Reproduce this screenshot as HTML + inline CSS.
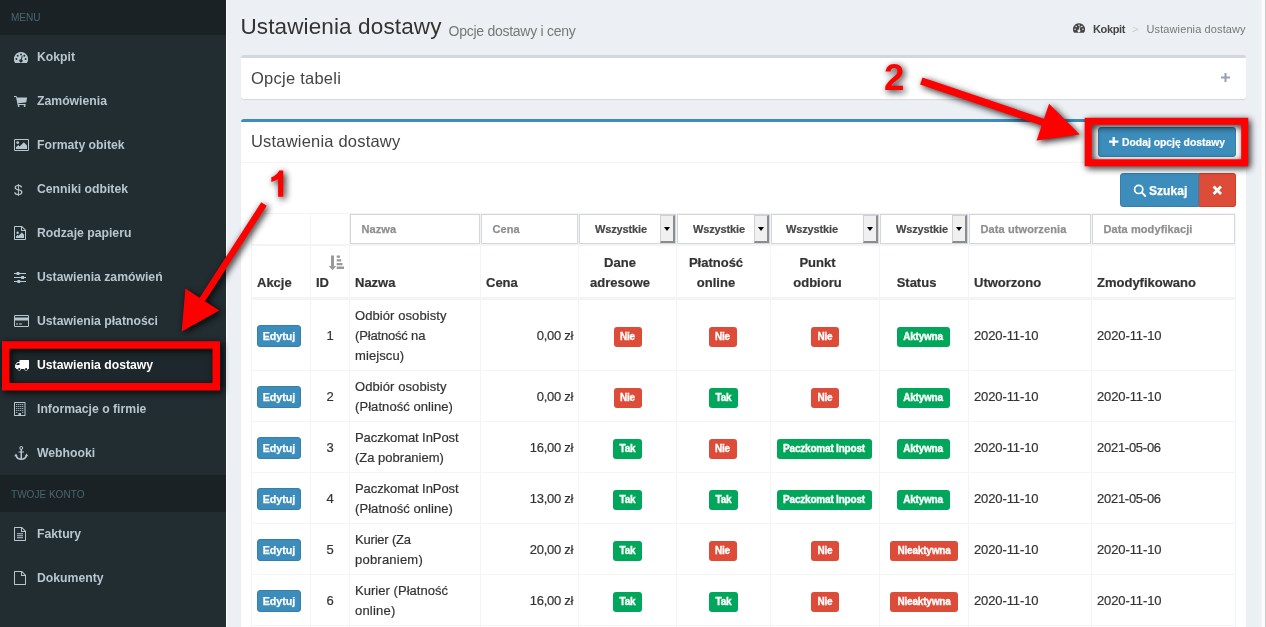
<!DOCTYPE html>
<html lang="pl">
<head>
<meta charset="utf-8">
<title>Ustawienia dostawy</title>
<style>
*{box-sizing:border-box;margin:0;padding:0}
html,body{width:1266px;height:627px;overflow:hidden;font-family:"Liberation Sans",sans-serif}
body{font-family:"Liberation Sans",sans-serif;font-size:13px;color:#333;background:#ecf0f5;position:relative}
#w{position:absolute;left:0;top:0;width:1266px;height:627px;overflow:hidden;will-change:transform}
.abs{position:absolute}
/* ---------- sidebar ---------- */
#side{position:absolute;left:0;top:0;width:226px;height:627px;background:#222d32}
#sideline{position:absolute;left:226px;top:0;width:1px;height:627px;background:#fbfcfd}
.mh{position:absolute;left:0;width:226px;background:#1a2226;color:#4b646f;font-size:11.500px;white-space:nowrap}
.mh span{position:absolute;left:11px;transform:scaleX(.873);transform-origin:0 50%}
.mi{position:absolute;left:0;width:226px;height:44px;color:#b8c7ce;font-weight:bold;font-size:13px;white-space:nowrap}
.mi span{position:absolute;left:37px;top:14px;line-height:16px;transform:scaleX(.94);transform-origin:0 50%}
.mi svg{position:absolute;fill:#b8c7ce}
.mi.act{background:#1e282c;color:#fff}
.mi.act svg{fill:#fff}
/* ---------- content header ---------- */
#h1{position:absolute;left:240.500px;top:13px;letter-spacing:.12px;font-size:22.500px;line-height:28px;color:#333;white-space:nowrap}
#h1s{position:absolute;left:448.500px;top:21px;letter-spacing:-.26px;font-size:14px;line-height:20px;color:#777;white-space:nowrap}
.bc{position:absolute;top:21px;font-size:11px;line-height:16px;white-space:nowrap}
/* ---------- boxes ---------- */
.box{position:absolute;left:241px;width:1005px;background:#fff;border-top:3px solid #d2d6de;border-radius:3px;box-shadow:0 1px 1px rgba(0,0,0,.1)}
.bt{position:absolute;left:10px;font-size:16.5px;line-height:20px;color:#444;white-space:nowrap}
/* ---------- buttons ---------- */
.btn{position:absolute;color:#fff;font-weight:bold;white-space:nowrap;text-align:center}
/* ---------- table ---------- */
table{position:absolute;left:251px;top:213px;width:985px;border-collapse:separate;border-spacing:0;table-layout:fixed}
td,th{border:0 solid #f4f4f4;border-right-width:1px;border-bottom-width:1px;padding:5px;vertical-align:middle;line-height:20px;font-size:13px;text-align:left;overflow:hidden}
td:first-child,th:first-child{border-left-width:1px}
tr.f td{padding:0;height:33px;position:relative;border-top-width:1px;border-bottom-width:2px;overflow:visible}
tr.h th{-webkit-text-stroke:.2px #333;height:54px;vertical-align:bottom;border-bottom-width:3px;font-weight:bold;color:#333;padding:5px 5px 4px 5px}
tr.h th.c{text-align:center;padding-right:20px}
tr.r td{height:51px;padding:6px 5px 4px;-webkit-text-stroke:.2px #333}
tr.r1 td{height:71px}
td.c{text-align:center}
td:nth-child(6) .rd{left:-1px}
td.p{text-align:right;letter-spacing:-.3px}
td.d{letter-spacing:-.11px}
td.n{letter-spacing:0}
.in{-webkit-text-stroke:.25px #8f8f8f;position:absolute;left:0;top:0;height:30px;border:1px solid #d2d6de;background:#fff;font-size:11px;font-weight:bold;color:#8f8f8f;line-height:28px;padding-left:10.500px;letter-spacing:.1px;white-space:nowrap}
.sel{-webkit-text-stroke:.2px #484848;position:absolute;left:0;top:0;height:30px;border:1px solid #d2d6de;background:#fff;font-size:11px;font-weight:bold;color:#484848;line-height:28px;white-space:nowrap;letter-spacing:-.13px}
.sel b{position:absolute;right:0;top:0;width:15px;height:28px;background:#f0f0f0;border:solid;border-width:1px 2px 2px 1px;border-color:#d0d0d0 #8c8c8c #8c8c8c #d0d0d0}
.sel b:after{content:"";position:absolute;left:2.500px;top:11px;border:3.500px solid transparent;border-top:4px solid #000;border-bottom:0}
.ed{-webkit-text-stroke:.25px #fff;position:relative;top:0;display:inline-block;width:44px;height:22px;background:#3c8dbc;border:1px solid #367fa9;border-radius:3px;color:#fff;font-weight:bold;font-size:11.5px;line-height:20px;text-align:center;vertical-align:middle}
.ed i{display:block;font-style:normal;transform:scaleX(.93)}
.lb{-webkit-text-stroke:.35px #fff;position:relative;top:1px;display:inline-block;height:20px;border-radius:3px;color:#fff;font-weight:bold;font-size:10px;line-height:20px;text-align:center;vertical-align:middle;letter-spacing:-.2px}
.num{font-family:"Liberation Sans",sans-serif;font-weight:bold;font-size:36.700px}
.g{background:#00a65a}.rd{background:#dd4b39}
</style>
</head>
<body>
<div id="w">
<div id="side">
<div class="mh" style="top:-2px;height:37px"><span style="top:11px;line-height:16px">MENU</span></div>

<div class="mi" style="top:35px"><svg style="left:14px;top:17px" width="14" height="11" viewBox="0 0 14 11"><path d="M7 0A7 7 0 0 0 .9 10.5q.2.5.7.5h10.8q.5 0 .7-.5A7 7 0 0 0 7 0z"/><g fill="#222d32"><circle cx="2.4" cy="7" r=".95"/><circle cx="3.7" cy="3.8" r=".95"/><circle cx="7" cy="2.4" r=".95"/><circle cx="10.3" cy="3.8" r=".95"/><circle cx="11.6" cy="7" r=".95"/><path d="M7.9 3.6l.9.25-1 3.6A1.6 1.6 0 1 1 6.9 7.2z"/></g></svg><span>Kokpit</span></div>

<div class="mi" style="top:79px"><svg style="left:14px;top:17px" width="13" height="11" viewBox="0 0 13 11"><path d="M0 0h2.2q.4 0 .5.5l.2.9H12.6q.5 0 .4.5l-.7 4q-.1.4-.5.5L4.3 7.2l.2.8H11.6v1H3.6L2.9 5.3 1.9 1H0z"/><circle cx="4.6" cy="10" r="1"/><circle cx="10.6" cy="10" r="1"/></svg><span>Zamówienia</span></div>

<div class="mi" style="top:123px"><svg style="left:14px;top:16px" width="15" height="12" viewBox="0 0 15 12"><path fill-rule="evenodd" d="M1.2 0h12.6A1.2 1.2 0 0 1 15 1.2v9.6a1.2 1.2 0 0 1-1.2 1.2H1.2A1.2 1.2 0 0 1 0 10.800V1.2A1.2 1.2 0 0 1 1.2 0zM1.300 1a.3.3 0 0 0-.3.3v9.400a.3.3 0 0 0 .3.3h12.400a.3.3 0 0 0 .3-.3V1.300a.3.3 0 0 0-.3-.3z"/><circle cx="3.700" cy="3.600" r="1.400"/><path d="M2 10V8.200l2.200-2.200 1.400 1.400L9.800 3.200 13 6.400V10z"/></svg><span>Formaty obitek</span></div>

<div class="mi" style="top:167px"><i style="position:absolute;left:14px;top:13px;font:normal 15.5px/20px 'Liberation Sans',sans-serif;color:#b8c7ce">$</i><span>Cenniki odbitek</span></div>

<div class="mi" style="top:211px"><svg style="left:14px;top:15px" width="12" height="14" viewBox="0 0 12 14"><path fill-rule="evenodd" d="M.8 0H8l4 4v9.200a.8.800 0 0 1-.8.800H.8A.8.800 0 0 1 0 13.200V.8A.8.800 0 0 1 .8 0zM1 1v12h10V5H7.500A.5.500 0 0 1 7 4.500V1zM8 1.400V4h2.600z"/><circle cx="3.600" cy="6.800" r="1.200"/><path d="M2 12v-1.600l1.600-1.600 1 1L7.800 6.600 10 8.800V12z"/></svg><span>Rodzaje papieru</span></div>

<div class="mi" style="top:255px"><svg style="left:14px;top:17px" width="12" height="11" viewBox="0 0 12 11"><path d="M0 1h2.600V0h2.800V1H12v1.100H5.400V3H2.600V2.100H0zM0 5h7.200V4h2.800V5H12v1.100H10V7H7.200V6.100H0zM0 9h3.400V8h2.800V9H12v1.100H6.200V11H3.400V10.100H0z"/></svg><span>Ustawienia zamówień</span></div>

<div class="mi" style="top:299px"><svg style="left:14px;top:16px" width="15" height="12" viewBox="0 0 15 12"><path fill-rule="evenodd" d="M1.200 0h12.600A1.200 1.200 0 0 1 15 1.200v9.600a1.200 1.200 0 0 1-1.200 1.200H1.200A1.200 1.200 0 0 1 0 10.800V1.200A1.200 1.200 0 0 1 1.200 0zM1.300 1a.3.3 0 0 0-.3.3V2.400h13V1.300a.3.3 0 0 0-.3-.3zM1 5.600v5.100a.3.300 0 0 0 .3.300h12.400a.3.300 0 0 0 .3-.3V5.600z"/><path d="M2 8.600h2v1H2zM5 8.600h3v1H5z"/></svg><span>Ustawienia płatności</span></div>

<div class="mi act" style="top:343px"><svg style="left:14.500px;top:17px" width="14" height="11" viewBox="0 0 14 11"><path d="M5 0h8.400q.6 0 .6.600V8.600q0 .4-.4.400h-.800a1.700 1.700 0 0 1-3.400 0H6a1.700 1.700 0 0 1-3.400 0H1.500Q1 9 1 8.500V8H.5Q0 8 0 7.500V5.300q0-.3.200-.6L2 2.500q.3-.4.800-.4H4.500V.5Q4.500 0 5 0zM1 5h3.500V3H2.900z"/><circle cx="4.300" cy="9.200" r="1.100" fill="#1e282c"/><circle cx="11.100" cy="9.200" r="1.100" fill="#1e282c"/></svg><span>Ustawienia dostawy</span></div>

<div class="mi" style="top:387px"><svg style="left:14px;top:15px" width="11.500" height="14" viewBox="0 0 11.500 14"><path fill-rule="evenodd" d="M.5 0h10.500a.5.500 0 0 1 .5.500v13a.5.500 0 0 1-.5.500H.5A.5.500 0 0 1 0 13.500V.5A.5.500 0 0 1 .5 0zM1 1v12h3.500v-2h2.500v2H10.500V1z"/><path d="M2.200 2h1.100v1.100H2.200zM4.200 2h1.100v1.100H4.200zM6.200 2h1.100v1.100H6.200zM8.200 2h1.100v1.100H8.200zM2.200 4h1.100v1.100H2.200zM4.200 4h1.100v1.100H4.200zM6.200 4h1.100v1.100H6.200zM8.200 4h1.100v1.100H8.200zM2.200 6h1.100v1.100H2.200zM4.200 6h1.100v1.100H4.200zM6.200 6h1.100v1.100H6.200zM8.200 6h1.100v1.100H8.200zM2.200 8h1.100v1.100H2.200zM4.200 8h1.100v1.100H4.200zM6.200 8h1.100v1.100H6.200zM8.200 8h1.100v1.100H8.200zM2.200 10h1.100v1.100H2.200zM8.200 10h1.100v1.100H8.200z"/></svg><span>Informacje o firmie</span></div>

<div class="mi" style="top:431px"><svg style="left:14px;top:15px" width="14.500" height="14" viewBox="0 0 14.500 14"><path fill-rule="evenodd" d="M7.250 0a1.900 1.900 0 0 1 .75 3.650V5.500H10v1H8v6.100q2.900-.5 3.700-2.800l-1.100.6 1.900-3 2 3-1.300-.5Q12 13.600 7.250 14 2.500 13.600 1.300 9.900L0 10.400l2-3 1.900 3-1.100-.6q.8 2.300 3.700 2.800V6.500h-2v-1h2V3.650A1.900 1.900 0 0 1 7.250 0zm0 1a.9.900 0 1 0 0 1.800.9.900 0 0 0 0-1.800z"/></svg><span>Webhooki</span></div>

<div class="mh" style="top:475px;height:37px"><span style="top:11px;line-height:16px">TWOJE KONTO</span></div>

<div class="mi" style="top:512px"><svg style="left:14px;top:15px" width="12" height="14" viewBox="0 0 12 14"><path fill-rule="evenodd" d="M.8 0H8l4 4v9.200a.8.800 0 0 1-.8.800H.8A.8.800 0 0 1 0 13.200V.8A.8.800 0 0 1 .8 0zM1 1v12h10V5H7.500A.5.500 0 0 1 7 4.500V1zM8 1.400V4h2.600z"/><path d="M3 6.200h6v1H3zM3 8.200h6v1H3zM3 10.200h6v1H3z"/></svg><span>Faktury</span></div>

<div class="mi" style="top:556px"><svg style="left:14px;top:15px" width="12" height="14" viewBox="0 0 12 14"><path fill-rule="evenodd" d="M.8 0H8l4 4v9.200a.8.800 0 0 1-.8.800H.8A.8.800 0 0 1 0 13.200V.8A.8.800 0 0 1 .8 0zM1 1v12h10V5H7.500A.5.500 0 0 1 7 4.500V1zM8 1.400V4h2.600z"/></svg><span>Dokumenty</span></div>
</div>
<div id="sideline"></div>
<div id="h1">Ustawienia dostawy</div>
<div id="h1s">Opcje dostawy i ceny</div>

<svg class="abs" style="left:1073px;top:23px" width="12" height="10" viewBox="0 0 14 11" fill="#444"><path d="M7 0A7 7 0 0 0 .9 10.5q.2.5.7.5h10.800q.5 0 .7-.5A7 7 0 0 0 7 0z"/><g fill="#ecf0f5"><circle cx="2.400" cy="7" r=".95"/><circle cx="3.700" cy="3.800" r=".95"/><circle cx="7" cy="2.400" r=".95"/><circle cx="10.300" cy="3.800" r=".95"/><circle cx="11.600" cy="7" r=".95"/><path d="M7.900 3.600l.9.250-1 3.600A1.600 1.600 0 1 1 6.900 7.200z"/></g></svg>
<div class="bc" style="left:1093px;color:#444;font-weight:bold;letter-spacing:-.37px">Kokpit</div>
<div class="bc" style="left:1132px;color:#ccc">&gt;</div>
<div class="bc" style="left:1146.500px;color:#777;letter-spacing:.11px">Ustawienia dostawy</div>

<div class="box" style="top:55px;height:44px">
  <div class="bt" style="top:10px;letter-spacing:.25px">Opcje tabeli</div>
  <svg class="abs" style="left:980px;top:15px" width="9" height="9" viewBox="0 0 9 9"><path fill="#97a0b3" d="M3.500 0h2v3.500H9v2H5.500V9h-2V5.500H0v-2h3.500z"/></svg>
</div>

<div class="box" id="box2" style="top:119px;height:520px;border-top-color:#3c8dbc">
  <div class="bt" style="top:9px;letter-spacing:.2px">Ustawienia dostawy</div>
  <div class="abs" style="left:0;top:40px;width:1005px;height:1px;background:#f4f4f4"></div>
</div>

<div class="btn" id="badd" style="left:1098px;top:127px;width:138px;height:30px;background:#3c8dbc;border:1px solid #367fa9;border-radius:3px;font-size:11px;line-height:28px;text-align:left"><svg class="abs" style="left:10.300px;top:8.800px" width="9.400" height="9.400" viewBox="0 0 9 9"><path fill="#fff" d="M3.400 0h2.200v3.400H9v2.200H5.600V9H3.400V5.600H0V3.400h3.400z"/></svg><span class="abs" style="left:22.500px;top:0;transform:scaleX(.942);transform-origin:0 50%;-webkit-text-stroke:.2px #fff">Dodaj opcję dostawy</span></div>

<div class="btn" id="bsz" style="left:1120px;top:173px;width:79px;height:34px;background:#3c8dbc;border:1px solid #367fa9;border-radius:3px 0 0 3px;font-size:13px;line-height:32px;text-align:left"><svg class="abs" style="left:12px;top:10px" width="13" height="13" viewBox="0 0 13 13"><circle cx="5.700" cy="5.400" r="4.100" fill="none" stroke="#fff" stroke-width="1.700"/><path d="M8.700 8.400L12.300 12" stroke="#fff" stroke-width="2" stroke-linecap="round"/></svg><span class="abs" style="left:28px;top:.5px;transform:scaleX(.93);transform-origin:0 50%;-webkit-text-stroke:.25px #fff">Szukaj</span></div>
<div class="btn" id="bx" style="left:1199px;top:173px;width:37px;height:34px;background:#dd4b39;border:1px solid #d73925;border-left:0;border-radius:0 3px 3px 0"><svg class="abs" style="left:13.200px;top:11.200px" width="10.600" height="10.600" viewBox="0 0 10 10"><path d="M1.500 1.500L8.500 8.500M8.500 1.500L1.500 8.500" stroke="#fff" stroke-width="2.600"/></svg></div>
<table>
<colgroup><col style="width:60px"><col style="width:39px"><col style="width:131px"><col style="width:98px"><col style="width:98px"><col style="width:94px"><col style="width:109px"><col style="width:89px"><col style="width:123px"><col style="width:144px"></colgroup>
<tr class="f"><td></td><td></td>
<td><div class="in" style="width:130px">Nazwa</div></td>
<td><div class="in" style="width:97px">Cena</div></td>
<td><div class="sel" style="width:97px;padding-left:15px">Wszystkie<b></b></div></td>
<td><div class="sel" style="width:93px;padding-left:15px">Wszystkie<b></b></div></td>
<td><div class="sel" style="width:108px;padding-left:14px">Wszystkie<b></b></div></td>
<td><div class="sel" style="width:88px;padding-left:15px">Wszystkie<b></b></div></td>
<td><div class="in" style="width:122px">Data utworzenia</div></td>
<td><div class="in" style="width:143px">Data modyfikacji</div></td></tr>
<tr class="h"><th>Akcje</th><th style="position:relative">ID<svg class="abs" style="left:17px;top:9px" width="17" height="16" viewBox="0 0 17 16" fill="#999"><path d="M3 .5h3V11h2.200L4.500 15.300.8 11H3z"/><path d="M8.700 .5h3.300v2.200H8.700zM8.700 4.200h4.500v2.400H8.700zM8.700 7.900h5.800v2.400H8.700zM8.700 11.600h7.300v2.500H8.700z"/></svg></th><th>Nazwa</th><th>Cena</th><th class="c">Dane adresowe</th><th class="c">Płatność online</th><th class="c">Punkt odbioru</th><th class="c">Status</th><th>Utworzono</th><th>Zmodyfikowano</th></tr>
<tr class="r r1"><td><span class="ed"><i>Edytuj</i></span></td><td class="c">1</td><td class="n"><span style="letter-spacing:0.08px">Odbiór osobisty</span><br><span style="letter-spacing:-0.17px">(Płatność na</span><br><span style="letter-spacing:0.09px">miejscu)</span></td><td class="p">0,00 zł</td><td class="c"><span class="lb rd" style="width:28px">Nie</span></td><td class="c"><span class="lb rd" style="width:28px">Nie</span></td><td class="c"><span class="lb rd" style="width:28px">Nie</span></td><td class="c"><span class="lb g" style="width:53px;left:-1px">Aktywna</span></td><td class="d">2020-11-10</td><td class="d">2020-11-10</td></tr>
<tr class="r"><td><span class="ed"><i>Edytuj</i></span></td><td class="c">2</td><td class="n"><span style="letter-spacing:0.08px">Odbiór osobisty</span><br><span style="letter-spacing:0.07px">(Płatność online)</span></td><td class="p">0,00 zł</td><td class="c"><span class="lb rd" style="width:28px">Nie</span></td><td class="c"><span class="lb g" style="width:29px">Tak</span></td><td class="c"><span class="lb rd" style="width:28px">Nie</span></td><td class="c"><span class="lb g" style="width:53px;left:-1px">Aktywna</span></td><td class="d">2020-11-10</td><td class="d">2020-11-10</td></tr>
<tr class="r"><td><span class="ed"><i>Edytuj</i></span></td><td class="c">3</td><td class="n"><span style="letter-spacing:-0.08px">Paczkomat InPost</span><br>(Za pobraniem)</td><td class="p">16,00 zł</td><td class="c"><span class="lb g" style="width:29px">Tak</span></td><td class="c"><span class="lb rd" style="width:28px">Nie</span></td><td class="c"><span class="lb g" style="width:95px;left:-1px">Paczkomat Inpost</span></td><td class="c"><span class="lb g" style="width:53px;left:-1px">Aktywna</span></td><td class="d">2020-11-10</td><td class="d" style="letter-spacing:-.27px">2021-05-06</td></tr>
<tr class="r"><td><span class="ed"><i>Edytuj</i></span></td><td class="c">4</td><td class="n"><span style="letter-spacing:-0.08px">Paczkomat InPost</span><br><span style="letter-spacing:0.07px">(Płatność online)</span></td><td class="p">13,00 zł</td><td class="c"><span class="lb g" style="width:29px">Tak</span></td><td class="c"><span class="lb g" style="width:29px">Tak</span></td><td class="c"><span class="lb g" style="width:95px;left:-1px">Paczkomat Inpost</span></td><td class="c"><span class="lb g" style="width:53px;left:-1px">Aktywna</span></td><td class="d">2020-11-10</td><td class="d" style="letter-spacing:-.27px">2021-05-06</td></tr>
<tr class="r"><td><span class="ed"><i>Edytuj</i></span></td><td class="c">5</td><td class="n"><span style="letter-spacing:-0.2px">Kurier (Za</span><br><span style="letter-spacing:0.22px">pobraniem)</span></td><td class="p">20,00 zł</td><td class="c"><span class="lb g" style="width:29px">Tak</span></td><td class="c"><span class="lb rd" style="width:28px">Nie</span></td><td class="c"><span class="lb rd" style="width:28px">Nie</span></td><td class="c"><span class="lb rd" style="width:68px">Nieaktywna</span></td><td class="d">2020-11-10</td><td class="d">2020-11-10</td></tr>
<tr class="r"><td><span class="ed"><i>Edytuj</i></span></td><td class="c">6</td><td class="n"><span style="letter-spacing:0.04px">Kurier (Płatność</span><br><span style="letter-spacing:0.2px">online)</span></td><td class="p">16,00 zł</td><td class="c"><span class="lb g" style="width:29px">Tak</span></td><td class="c"><span class="lb g" style="width:29px">Tak</span></td><td class="c"><span class="lb rd" style="width:28px">Nie</span></td><td class="c"><span class="lb rd" style="width:68px">Nieaktywna</span></td><td class="d">2020-11-10</td><td class="d">2020-11-10</td></tr>
<tr class="r"><td></td><td></td><td></td><td></td><td></td><td></td><td></td><td></td><td></td><td></td></tr>
</table>
<div class="abs" style="left:1261px;top:0;width:5px;height:627px;background:linear-gradient(90deg,#f3f5f8 0,#f3f5f8 1px,#fbfbfb 1px,#fbfbfb 4px,#c9c9c9 4px)"></div>
<svg class="abs" id="ann" style="left:0;top:0" width="1266" height="627" viewBox="0 0 1266 627">
<defs><filter id="sh" x="-2%" y="-10%" width="104%" height="125%" color-interpolation-filters="sRGB"><feGaussianBlur in="SourceAlpha" stdDeviation="3.800"/><feOffset dx="1.500" dy="2"/><feComponentTransfer><feFuncA type="linear" slope=".9"/></feComponentTransfer><feMerge><feMergeNode/><feMergeNode in="SourceGraphic"/></feMerge></filter></defs>
<g filter="url(#sh)" fill="#ff0000">
<rect x="5.750" y="345" width="210.500" height="41.750" fill="none" stroke="#ff0000" stroke-width="7.500"/>
<rect x="1088.200" y="121.300" width="156.500" height="41.500" fill="none" stroke="#ff0000" stroke-width="7"/>
<path d="M261.3 202.2L199.6 297.7L185.4 288.5L181.7 331.4L219.3 310.4L205.0 301.2L266.7 205.8z"/>
<path d="M920.1 84.4L1041.7 125.6L1036.6 140.5L1079.7 134.6L1049.1 103.7L1044.0 118.7L922.5 77.4z"/>
<path d="M283.300 196.700H278.100V179Q275 181.200 271.300 182V177.200Q276.800 175.200 279.300 170.400H283.300z"/>
<text class="num" x="884" y="89.700">2</text>
</g>
</svg>
</div>
</body>
</html>
